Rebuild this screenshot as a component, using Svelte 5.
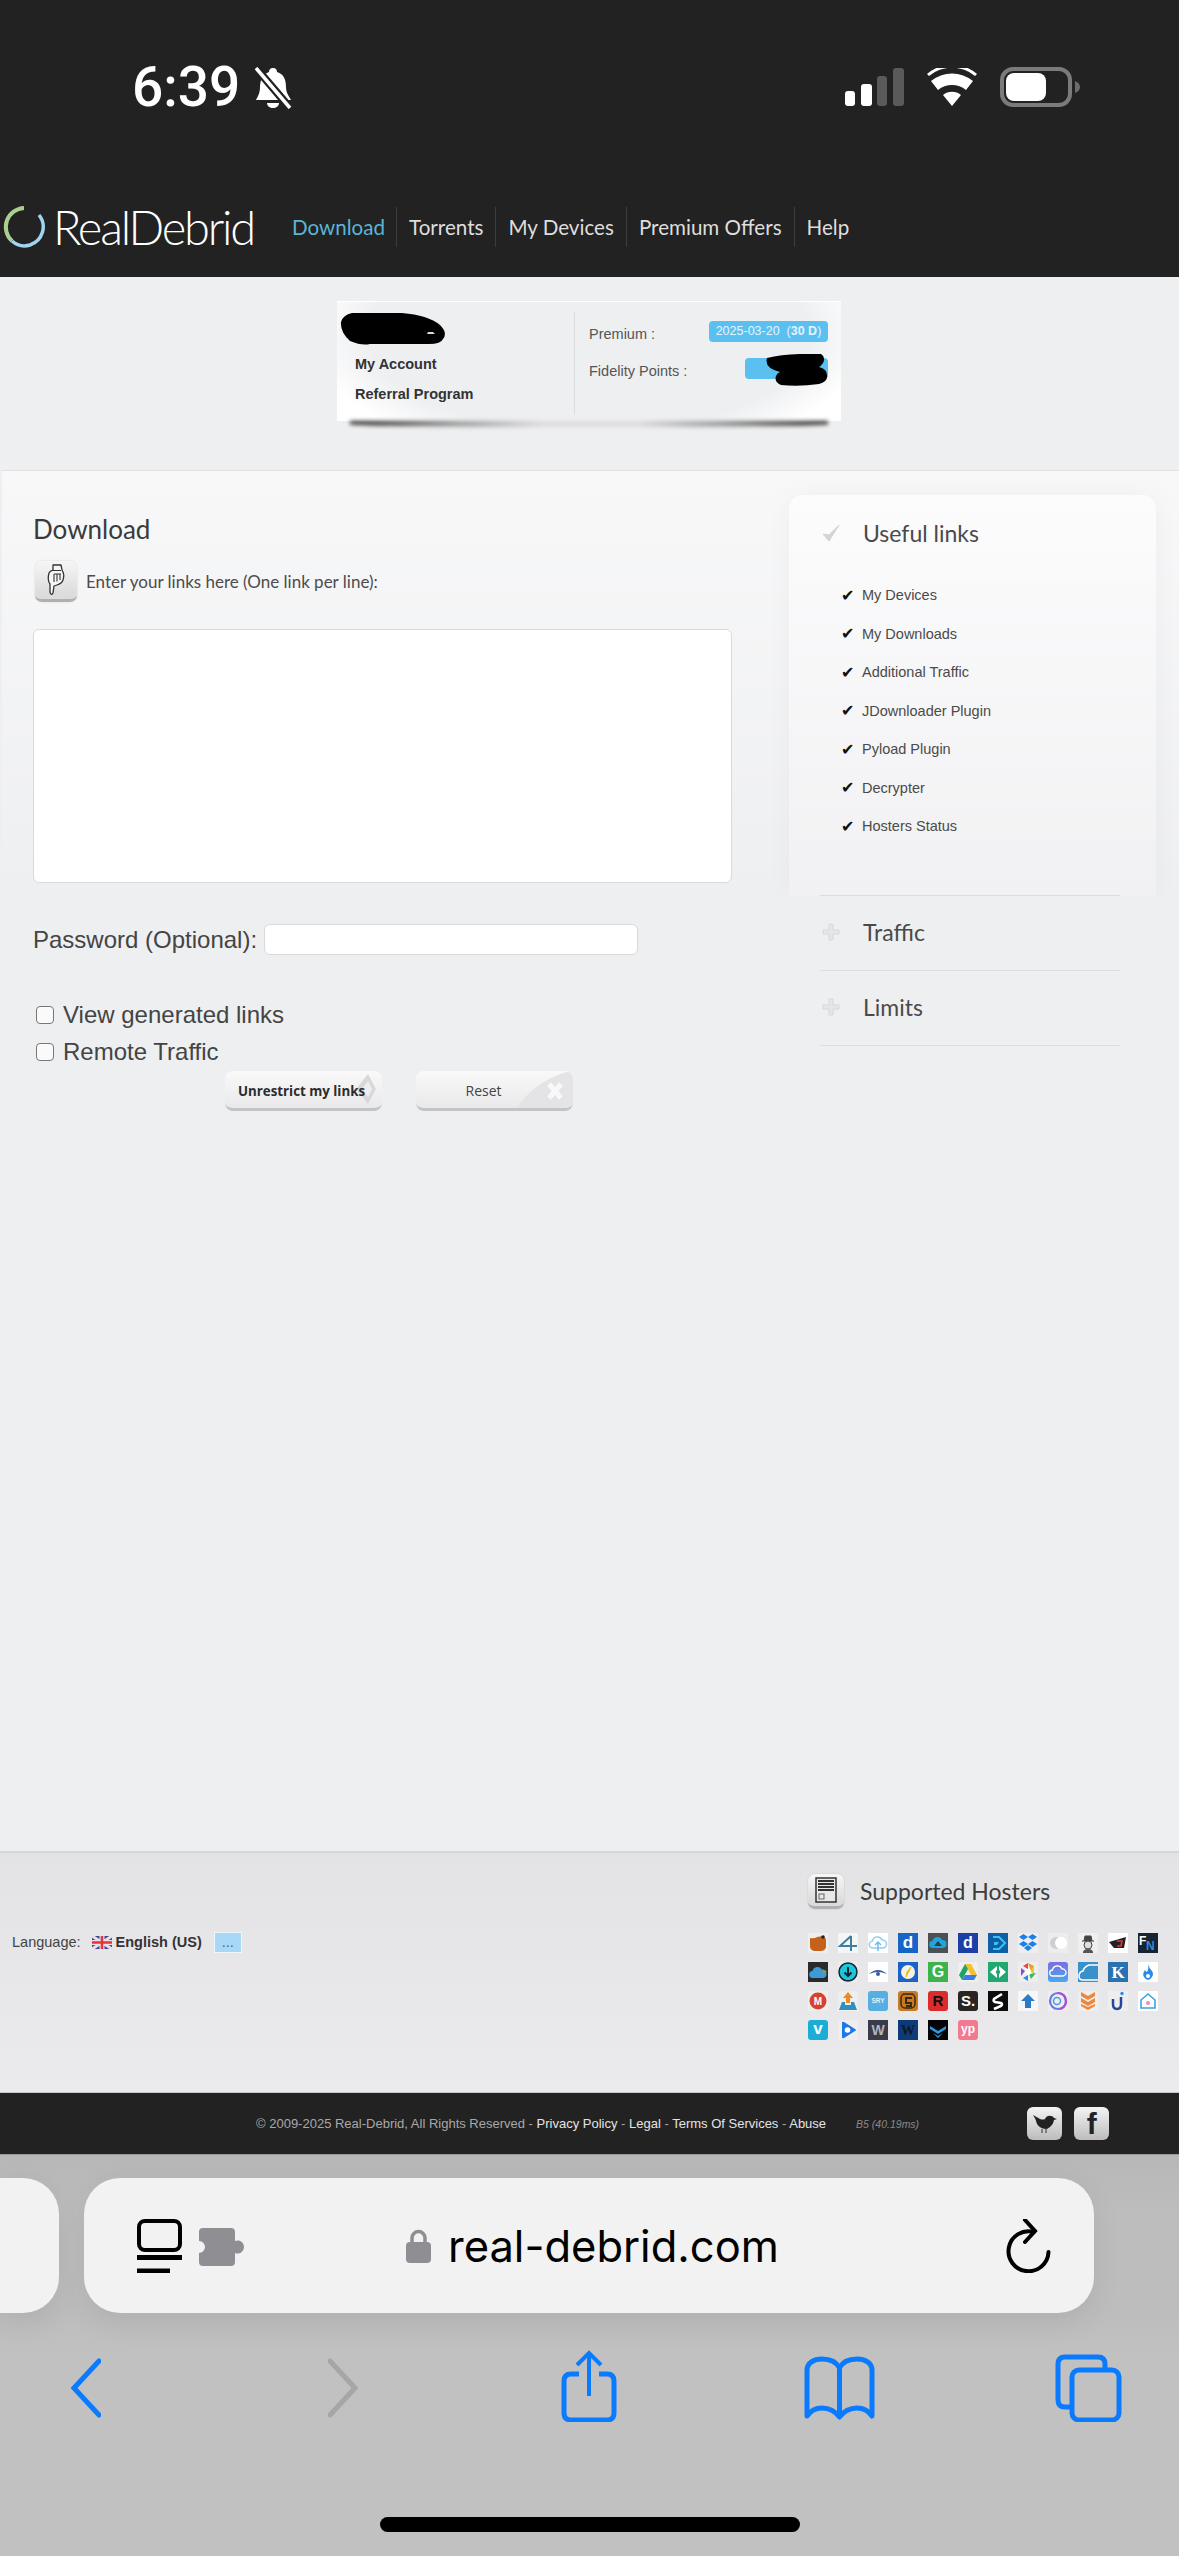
<script>
	const nav = ['Download', 'Torrents', 'My Devices', 'Premium Offers', 'Help'];
	const usefulLinks = ['My Devices', 'My Downloads', 'Additional Traffic', 'JDownloader Plugin', 'Pyload Plugin', 'Decrypter', 'Hosters Status'];

	const txt = (t, fill, size = 15, weight = 700, y = 15, family = 'Liberation Sans') =>
		`<text x="10" y="${y}" text-anchor="middle" font-family="${family}" font-size="${size}" font-weight="${weight}" fill="${fill}">${t}</text>`;
	const cloud = (fill) => `<path d="M5 15a3.5 3.5 0 0 1-.5-7 5 5 0 0 1 9.5-1 4 4 0 0 1 1 8z" fill="${fill}"/>`;

	// 12 per row, the last row is short
	const hosters = [
		{ bg: '#eeeeef', g: '<path d="M2 5q4 1 7-1l6-1 3 3v8q-1 4-5 4H7q-4 0-5-4z" fill="#c5611b"/><circle cx="15" cy="4" r="1.800" fill="#222"/>' },
		{ bg: '#f4f5f6', g: '<path d="M13 3 2 13h17M13 3v15" fill="none" stroke="#3f7f9c" stroke-width="2"/>' },
		{ bg: '#fff', g: '<path d="M5 15a3.5 3.5 0 0 1-.5-7 5 5 0 0 1 9.500-1 4 4 0 0 1 1 8z" fill="none" stroke="#8fd0f2" stroke-width="1.500"/><path d="M10 18V9M7 12l3-3 3 3" fill="none" stroke="#6fbfea" stroke-width="1.500"/>' },
		{ bg: '#1565c8', g: txt('d', '#fff', 17) },
		{ bg: '#4b5057', g: cloud('#1fa6d9') + '<path d="M10 8l-4 5h8z" fill="#24404f"/>' },
		{ bg: '#1c3fa6', g: txt('d', '#fff', 16) },
		{ bg: '#0f5ea8', g: '<path d="M5 4h6l6 6-6 6H5" fill="none" stroke="#35c5ee" stroke-width="2"/><path d="M6 9h5l-2 3H6z" fill="#35c5ee"/>' },
		{ bg: '#eeeeef', g: '<path d="m5.500 1 4.500 3-4.500 3L1 4zm9 0L19 4l-4.500 3L10 4zM5.500 8 10 11l-4.500 3L1 11zm9 0 4.500 3-4.500 3L10 11zM6 15l4-3 4 3-4 3z" fill="#1a80ea"/>' },
		{ bg: '#ededee', g: '<circle cx="8" cy="10" r="6" fill="#cfcfd1"/><circle cx="13" cy="10" r="6" fill="#fff"/>' },
		{ bg: '#efefef', g: '<path d="M4 8h12M6 8l1-5h6l1 5" fill="#444" stroke="#444"/><circle cx="10" cy="12" r="4" fill="#ddd" stroke="#444"/><path d="M5 20c0-3 2-4 5-4s5 1 5 4" fill="#555"/>' },
		{ bg: '#fff', g: '<path d="m1 9 17-5-2 11H6z" fill="#222"/><path d="M9 8h5l-1 5H9" fill="none" stroke="#e33" stroke-width="1.500"/>' },
		{ bg: '#162533', g: '<text x="1" y="12" font-family="Liberation Sans" font-size="12" font-weight="700" fill="#fff">F</text><text x="8" y="17" font-family="Liberation Sans" font-size="12" font-weight="700" fill="#2a8fe0">N</text>' },

		{ bg: '#2a2a2c', g: '<g transform="translate(0 1)">' + cloud('#3d9ad8') + '</g><path d="m14 7 5 2-4 4z" fill="#7a9a6a"/>' },
		{ bg: '#ececed', g: '<circle cx="10" cy="10" r="9" fill="#1cc8d8" stroke="#123" stroke-width="1.500"/><path d="M10 5v9M6.500 10.500 10 14l3.500-3.500" fill="none" stroke="#123" stroke-width="2"/>' },
		{ bg: '#fff', g: '<path d="M1 12q9-8 18 0-9-4-18 0z" fill="#3a5ca8"/><circle cx="10" cy="12" r="2" fill="#3a5ca8"/>' },
		{ bg: '#1a62c8', g: '<circle cx="10" cy="10" r="7" fill="#f2f2e6"/><path d="m13 5-5 10 1-5z" fill="#e8b820" stroke="#e8b820"/>' },
		{ bg: '#3cb44a', g: txt('G', '#fff', 16) },
		{ bg: '#eeeeef', g: '<path d="M7 2h6l6 11h-6z" fill="#f6c02c"/><path d="M7 2 1 13l3 5 6-11z" fill="#1fa463"/><path d="M4 18h12l3-5H7z" fill="#3a7be8"/>' },
		{ bg: '#1fa870', g: '<path d="m9 4-7 6 7 6zM11 4l7 6-7 6z" fill="#fff"/><path d="M8 8.500h4v3H8z" fill="#1fa870"/>' },
		{ bg: '#eeeeef', g: '<path d="M10 1 5 4l5 3z" fill="#e8483a"/><path d="m10 1 6 3-3 5z" fill="#f29a1f"/><path d="M16 4v8l-4-3z" fill="#f2c81f"/><path d="m18 11-5 6-2-5z" fill="#3ab86a"/><path d="m10 19-5-3 5-3z" fill="#2a8fe0"/><path d="M3 14V6l4 3z" fill="#8a4ad8"/><circle cx="10" cy="10" r="3" fill="#fff"/>' },
		{ rounded: true, bg: 'linear-gradient(#7a6ee0,#4aa8ee)', g: '<path d="M5 14a3 3 0 0 1-.500-6 5 5 0 0 1 9.500-1 3.500 3.500 0 0 1 1 7z" fill="none" stroke="#fff" stroke-width="1.300"/>' },
		{ bg: '#3a90c8', g: '<path d="M20 3H11Q6 5 5 9 1 10 1 14t4 4h15" fill="none" stroke="#fff" stroke-width="1.500"/>' },
		{ bg: '#2a72b0', g: txt('K', '#fff', 17, 700, 16, 'Liberation Serif') },
		{ bg: '#fff', g: '<path d="M10 2q1 4 4 7 2 3 0 6-2 3-4 3t-4-3q-2-3 1-7 1 2 2 2 2-3 1-8z" fill="#2a8ae8"/><circle cx="10" cy="14" r="2" fill="#fff"/>' },

		{ bg: '#eeeeef', g: '<circle cx="10" cy="10" r="8.500" fill="#d8412f"/>' + txt('M', '#fff', 10, 700, 13.500) },
		{ bg: '#eeeeef', g: '<path d="M10 1 15 7h-3v5H8V7H5z" fill="#ef8a1f"/><path d="M4 11h3v3h6v-3h3l3 8H1z" fill="#2f8fc0"/>' },
		{ rounded: true, bg: '#56aee2', g: txt('SRY', '#dff1fb', 6.500, 700, 12) },
		{ rounded: true, bg: '#c87a20', g: '<rect x="3" y="3" width="14" height="14" rx="4" fill="none" stroke="#3a2a14" stroke-width="1.500"/><path d="M14 7H8v5h5v3H8" fill="none" stroke="#3a2a14" stroke-width="2"/>' },
		{ rounded: true, bg: '#dd2b2b', g: txt('R', '#111', 15) },
		{ rounded: true, bg: '#2a2422', g: txt('S.', '#fff', 15) },
		{ bg: '#0c0c0c', g: '<path d="M14 3 6 8q-1 2 1 3l6 1q2 1 0 3l-7 3" fill="none" stroke="#fff" stroke-width="2.600"/>' },
		{ bg: '#f7f7f8', g: '<path d="M10 3 17 10h-4v7H7v-7H3z" fill="#2a7bc8"/>' },
		{ bg: '#eeeeef', g: '<circle cx="10" cy="10" r="8" fill="none" stroke="#6a78e8" stroke-width="2.200"/><path d="M10 2a8 8 0 0 1 8 8 8 8 0 0 1-6 8" fill="none" stroke="#b04ad8" stroke-width="2.200"/><circle cx="9" cy="10" r="3.500" fill="none" stroke="#4a9ae8" stroke-width="1.500"/>' },
		{ bg: '#eeeeef', g: '<path d="m3 1 7 4 7-4v4l-7 4-7-4zm0 6 7 4 7-4v4l-7 4-7-4zm0 6 7 3 7-3v2l-7 4-7-4z" fill="#ef8638"/>' },
		{ bg: '#eeeeef', g: '<path d="M13 6v7q0 5-4 5t-4-5V8" fill="none" stroke="#27479f" stroke-width="2.500"/><circle cx="14" cy="2.500" r="1.700" fill="#2a8ae8"/>' },
		{ bg: '#fff', g: '<path d="m10 3 7 6v8H3V9z" fill="none" stroke="#3aa0e8" stroke-width="1.600"/><circle cx="10" cy="12" r="2" fill="#e88ac8"/>' },

		{ rounded: true, bg: '#1aaed6', g: txt('v', '#fff', 17, 700, 14) },
		{ bg: '#eeeeef', g: '<path d="M4 3q0-2 2-1l11 7q2 1 0 2L6 18q-2 1-2-1z" fill="#1a78e8"/><circle cx="9.500" cy="10" r="2.800" fill="#fff"/>' },
		{ bg: '#3a3b4a', g: txt('W', '#b4b4b8', 14) },
		{ bg: '#0d3a7a', g: txt('W', '#101828', 14, 700, 15, 'Liberation Serif') },
		{ bg: '#050505', g: '<path d="m2 6 8 5 8-5v3l-8 5-8-5zm3 7 5 3 5-3-5 5z" fill="#2a9ae0"/>' },
		{ rounded: true, bg: '#f27a90', g: txt('yp', '#fff', 12, 700, 13) }
	];
</script>

<div class="page">
	<header class="top">
		<div class="status">
			<div class="time">6:39
				<svg class="bell" viewBox="0 0 40 42" width="40" height="42">
					<path d="M20 1c3 0 4 2 4 4 7 2 9 8 9 15 0 6 3 9 5 13H3c2-4 4-7 4-13 0-7 3-13 9-15 0-2 1-4 4-4z" fill="#fff"/>
					<path d="M14 36h12c0 3-3 5-6 5s-6-2-6-5z" fill="#fff"/>
					<path d="M3 1l34 40" stroke="#222" stroke-width="8"/>
					<path d="M3 1l34 40" stroke="#fff" stroke-width="3.500"/>
				</svg>
			</div>
			<div class="indicators">
				<svg viewBox="0 0 59 38" width="59" height="38">
					<rect x="0" y="23" width="10" height="15" rx="3" fill="#fff"/>
					<rect x="16" y="16" width="11" height="22" rx="3" fill="#fff"/>
					<rect x="32" y="8" width="10" height="30" rx="3" fill="#5a5a5a"/>
					<rect x="48" y="0" width="11" height="38" rx="3" fill="#5a5a5a"/>
				</svg>
				<svg viewBox="0 0 50 38" width="50" height="38">
					<path d="M25 38 16 27a14 14 0 0 1 18 0zM11 22l-7-9a33 33 0 0 1 42 0l-7 9a22 22 0 0 0-28 0z" fill="#fff"/>
					<path d="M2 8 0 6a38 38 0 0 1 50 0l-2 2a36 36 0 0 0-46 0z" fill="#fff"/>
				</svg>
				<svg viewBox="0 0 80 40" width="80" height="40">
					<rect x="2" y="2" width="68" height="36" rx="11" fill="none" stroke="#7b7b7b" stroke-width="4"/>
					<rect x="6" y="6" width="40" height="28" rx="8" fill="#fff"/>
					<path d="M75 14q5 2 5 6t-5 6z" fill="#6b6b6b"/>
				</svg>
			</div>
		</div>
		<div class="brandbar">
			<div class="logo">
				<svg viewBox="0 0 44 44" width="44" height="44">
					<path d="M22 3a19 19 0 0 0-12 33" fill="none" stroke="#a9d08e" stroke-width="4"/>
					<path d="M10 36a19 19 0 0 0 18 4 19 19 0 0 0 9-30" fill="none" stroke="#9fd5ef" stroke-width="3.500"/>
				</svg>
				<span class="wordmark">RealDebrid</span>
			</div>
			<nav>
				{#each nav as item, i}
					<span class="navitem" class:active={i === 0}>{item}</span>
				{/each}
			</nav>
		</div>
	</header>

	<main>
		<div class="account">
			<div class="acc-left">
				<div class="acc-link first">My Account</div>
				<div class="acc-link">Referral Program</div>
			</div>
			<div class="acc-right">
				<div class="acc-row">
					<span class="acc-label">Premium :</span>
					<span class="pill">2025-03-20 &nbsp;(<b>30 D</b>)</span>
				</div>
				<div class="acc-row second">
					<span class="acc-label">Fidelity Points :</span>
					<span class="pill short"></span>
				</div>
			</div>
			<svg class="blob name" viewBox="0 0 106 34" width="106" height="34">
				<path d="M12 1h50q26 2 38 12 8 8 3 14-2 5-14 5H30q-8 2-20-3Q0 20 1 10 3 3 12 1z" fill="#000"/>
				<path d="M88 20h5l2 2h-8z" fill="#e8d8c8"/>
			</svg>
			<svg class="blob points" viewBox="0 0 64 32" width="64" height="32">
				<path d="M3 4q20-5 54-4 5 3 2 9-2 3-4 4 8 2 8 8 1 7-8 9-20 3-38 1-7-3-5-9 1-3 4-4Q0 14 3 4z" fill="#000"/>
			</svg>
		</div>

		<section class="workspace">
			<div class="form">
				<h1>Download</h1>
				<div class="hint">
					<span class="tile">
						<svg viewBox="0 0 20 32" width="20" height="32">
							<path d="M7 1h8l1 5c2 3 2 7 1 10-1 3-3 4-6 5l-3 1-1 7q-1 2-2 1-1-1-1-2v-8Q1 16 3 9q1-2 4-3z" fill="#f6f6f6" stroke="#333" stroke-width="1.300" stroke-linejoin="round"/>
							<path d="M6 6.500h9M8 10v8M11 9.500v8M14 9.500v6.500M8 10h7" fill="none" stroke="#333" stroke-width="1.100"/>
						</svg>
					</span>
					<span>Enter your links here (One link per line):</span>
				</div>
				<textarea aria-label="Links"></textarea>
				<div class="password">
					<label for="pw">Password (Optional):</label>
					<input id="pw" type="text" />
				</div>
				<label class="check first"><input type="checkbox" />View generated links</label>
				<label class="check"><input type="checkbox" />Remote Traffic</label>
				<div class="actions">
					<button class="primary">
						<svg viewBox="0 0 24 34" width="24" height="34"><path d="M14 2 2 17l12 15 8-15z" fill="#d8d8da"/><path d="m14 9-6 8 6 8 4-8z" fill="#eeeef0"/></svg>
						<span class="label">Unrestrict my links</span>
					</button>
					<button class="reset">
						<svg viewBox="0 0 56 38" width="56" height="38"><path d="M0 38Q18 10 56 0v38z" fill="#e4e4e6"/><path d="m32 14 12 14m0-14L32 28" stroke="#f8f8f9" stroke-width="5"/></svg>
						<span class="label">Reset</span>
					</button>
				</div>
			</div>

			<aside>
				<div class="card">
					<div class="acc-head open">
						<svg viewBox="0 0 18 18" width="18" height="18"><path d="m1 10 6 7L17 1 7 11z" fill="#d4d4d6" stroke="#d4d4d6"/></svg>
						<span>Useful links</span>
					</div>
					<ul>
						{#each usefulLinks as link}
							<li><span class="tick">✔</span>{link}</li>
						{/each}
					</ul>
					<div class="rule"></div>
				</div>
				<div class="acc-head closed">
					<svg viewBox="0 0 18 18" width="18" height="18"><path d="M7 1h4v6h6v4h-6v6H7v-6H1V7h6z" fill="#e6e6e8" stroke="#d8d8da"/></svg>
					<span>Traffic</span>
				</div>
				<div class="acc-head closed">
					<svg viewBox="0 0 18 18" width="18" height="18"><path d="M7 1h4v6h6v4h-6v6H7v-6H1V7h6z" fill="#e6e6e8" stroke="#d8d8da"/></svg>
					<span>Limits</span>
				</div>
			</aside>
		</section>

		<section class="lower">
			<div class="language">
				<span class="lang-label">Language:</span>
				<svg viewBox="0 0 20 13" width="20" height="13">
					<rect width="20" height="13" fill="#3a4a94"/>
					<path d="m0 0 20 13M20 0 0 13" stroke="#eadfe6" stroke-width="3"/>
					<path d="M10 0v13M0 6.500h20" stroke="#eadfe6" stroke-width="5"/>
					<path d="M10 0v13M0 6.500h20" stroke="#e2353a" stroke-width="2.500"/>
				</svg>
				<b>English (US)</b>
				<span class="more">...</span>
			</div>
			<div class="hosters">
				<div class="hosters-head">
					<span class="tile small">
						<svg viewBox="0 0 22 26" width="22" height="26">
							<rect x="1" y="1" width="20" height="24" fill="#e8e8e8" stroke="#333" stroke-width="1.500"/>
							<path d="M3 4h16M3 7h16M3 10h16M3 13h16" stroke="#333" stroke-width="1.800"/>
							<rect x="4" y="17" width="5" height="5" fill="none" stroke="#666"/>
						</svg>
					</span>
					<span>Supported Hosters</span>
				</div>
				<div class="grid">
					{#each hosters as h}
						<span class="hoster" class:rounded={h.rounded} style="background:{h.bg}">
							<svg viewBox="0 0 20 20" width="20" height="20">{@html h.g}</svg>
						</span>
					{/each}
				</div>
			</div>
		</section>

		<footer>
			<span class="legal">© 2009-2025 Real-Debrid, All Rights Reserved - <em>Privacy Policy</em> - <em>Legal</em> - <em>Terms Of Services</em> - <em>Abuse</em></span>
			<span class="build">B5 (40.19ms)</span>
			<span class="social">
				<svg viewBox="0 0 26 24" width="26" height="24">
					<path d="M1 3l7 4q3 1 5 0 2-4 6-3 2 0 3 2l3 1-3 1q-1 6-7 9-7 0-10-5Q4 7 1 3z" fill="#222"/>
					<path d="M10 17v4M14 17v4" stroke="#666" stroke-width="1.500"/>
				</svg>
			</span>
			<span class="social fb">f</span>
		</footer>
	</main>

	<div class="browser">
		<div class="urlrow">
			<div class="peek"></div>
			<div class="urlbar">
				<svg class="tabs-ico" viewBox="0 0 45 54" width="45" height="54">
					<rect x="2" y="2" width="41" height="29" rx="6" fill="none" stroke="#000" stroke-width="4"/>
					<path d="M0 38.500h45" stroke="#000" stroke-width="5"/>
					<path d="M0 52h33" stroke="#000" stroke-width="5"/>
				</svg>
				<svg class="puzzle" viewBox="0 0 47 38" width="47" height="38">
					<path d="M4 0h28q4 0 4 4v9a6.500 6.500 0 1 1 0 12v9q0 4-4 4H4q-4 0-4-4v-9a6 6 0 1 0 0-12V4q0-4 4-4z" fill="#8e8e93"/>
				</svg>
				<div class="address">
					<svg viewBox="0 0 25 34" width="25" height="34">
						<path d="M6 15V9a6.500 6.500 0 0 1 13 0v6" fill="none" stroke="#8e8e93" stroke-width="3.500"/>
						<rect y="13" width="25" height="21" rx="4" fill="#8e8e93"/>
					</svg>
					<span>real-debrid.com</span>
				</div>
				<svg class="reload" viewBox="0 0 45 54" width="45" height="54">
					<path d="M28 13A20 20 0 1 0 42.500 33" fill="none" stroke="#000" stroke-width="4" stroke-linecap="round"/>
					<path d="m19 1 10 11-10 11" fill="none" stroke="#000" stroke-width="4" stroke-linecap="round"/>
				</svg>
			</div>
		</div>
		<div class="toolbar">
			<svg class="back" viewBox="0 0 30 72" width="30" height="72"><path d="M28 11 3 38l25 27" fill="none" stroke="#0a7aff" stroke-width="5" stroke-linecap="round"/></svg>
			<svg class="forward" viewBox="0 0 30 72" width="30" height="72"><path d="m2 11 25 27L2 65" fill="none" stroke="#a6a6a6" stroke-width="5" stroke-linecap="round"/></svg>
			<svg class="share" viewBox="0 0 56 72" width="56" height="72">
				<path d="M18 24h-8q-7 0-7 7v32q0 7 7 7h36q7 0 7-7V31q0-7-7-7h-8" fill="none" stroke="#0a7aff" stroke-width="5"/>
				<path d="M28 46V3M16 15 28 3l12 12" fill="none" stroke="#0a7aff" stroke-width="4"/>
			</svg>
			<svg class="book" viewBox="0 0 71 72" width="71" height="72">
				<path d="M35.500 18C32 11 24 9 18 9 10 9 3 13 3 20v46c4-6 9-8 15-8 7 0 13 3 17.500 9 4.500-6 10.500-9 17.500-9 6 0 11 2 15 8V20c0-7-7-11-15-11-6 0-14 2-17.500 9zM35.500 18v46" fill="none" stroke="#0a7aff" stroke-width="5" stroke-linejoin="round"/>
			</svg>
			<svg class="tabs" viewBox="0 0 67 72" width="67" height="72">
				<path d="M50 20v-6q0-7-7-7H10q-7 0-7 7v36q0 7 7 7h7" fill="none" stroke="#0a7aff" stroke-width="5"/>
				<rect x="17" y="20" width="47" height="50" rx="7" fill="none" stroke="#0a7aff" stroke-width="5"/>
			</svg>
		</div>
		<div class="homebar"></div>
	</div>
</div>

<style>
	:global(body) {
		margin: 0;
		background: #c0c0c0;
	}

	.page {
		width: 1179px;
		height: 2556px;
		display: flex;
		flex-direction: column;
		overflow: hidden;
		font-family: "Liberation Sans", Arial, sans-serif;
		color: #3c3c3c;
	}

	/* dark header with the phone status bar on top */
	.top {
		height: 277px;
		box-sizing: border-box;
		background: #222223;
		color: #fff;
		padding-top: 66px;
	}
	.status {
		display: flex;
		justify-content: space-between;
		padding: 0 99px 0 132px;
		height: 42px;
	}
	.time {
		display: flex;
		align-items: center;
		gap: 13px;
		font: 500 55px/42px Roboto, sans-serif;
	}
	.bell {
		margin-top: 1px;
	}
	.indicators {
		display: flex;
		align-items: center;
		gap: 23px;
	}
	.brandbar {
		display: flex;
		align-items: center;
		height: 48px;
		margin-top: 95px;
	}
	.logo {
		display: flex;
		align-items: center;
		gap: 7px;
		margin-left: 2px;
		width: 290px;
	}
	.wordmark {
		font: 300 47px/48px Lato, sans-serif;
		letter-spacing: -2.2px;
	}
	nav {
		display: flex;
		align-items: center;
	}
	.navitem {
		font: 400 20.6px/40px Lato, sans-serif;
		color: #dedede;
		padding: 0 12px;
		border-left: 1px solid #3d3d3e;
	}
	.navitem.active {
		color: #5ab5d6;
		border-left: none;
		padding: 0 11px 0 0;
	}

	main {
		display: flex;
		flex-direction: column;
		background: #eeeff1;
		height: 1878px;
	}

	/* account box */
	.account {
		position: relative;
		display: flex;
		box-sizing: border-box;
		width: 504px;
		height: 120px;
		margin: 24px 0 49px 337px;
		background: radial-gradient(ellipse 56% 105% at 50% 28%, #eeeff1 78%, #fff 100%);
		border-top: 1px solid #fff;
		font-size: 14.5px;
	}
	.account::after {
		content: "";
		position: absolute;
		left: 13px;
		right: 13px;
		top: 100%;
		height: 6px;
		background: linear-gradient(to right, #222, #999 22%, #ddd 40%, #ddd 60%, #999 78%, #222);
		filter: blur(2px);
		border-radius: 0 0 50% 50%;
	}
	.acc-left {
		width: 237px;
		box-sizing: border-box;
		padding: 52px 0 0 18px;
	}
	.acc-link {
		font-weight: 700;
		line-height: 20px;
		margin-bottom: 10px;
		color: #333;
	}
	.acc-right {
		flex: 1;
		margin: 10px 0 6px;
		padding: 8px 13px 0 14px;
		border-left: 1px solid #dcdcde;
		color: #555;
	}
	.acc-row {
		display: flex;
		justify-content: space-between;
		align-items: center;
		height: 22px;
	}
	.acc-row.second {
		margin-top: 15px;
	}
	.acc-label {
		padding-top: 5px;
	}
	.pill {
		box-sizing: border-box;
		width: 119px;
		height: 21px;
		line-height: 21px;
		text-align: center;
		font-size: 12.5px;
		color: #e4f4fc;
		background: #5bc0ef;
		border-radius: 4px;
		white-space: nowrap;
	}
	.pill.short {
		width: 83px;
	}
	.blob {
		position: absolute;
	}
	.blob.name {
		left: 3px;
		top: 10px;
	}
	.blob.points {
		right: 13px;
		top: 52px;
	}

	/* main two columns */
	.workspace {
		position: relative;
		flex: 1;
		display: flex;
		justify-content: space-between;
		box-sizing: border-box;
		margin-left: 2px;
		padding: 24px 23px 0 31px;
		background: linear-gradient(#f8f8f9, #eeeff1 430px);
		border-top: 1px solid #e1e1e3;
	}
	.form {
		width: 698px;
	}
	h1 {
		margin: 14px 0 12px;
		font: 400 26px/40px Lato, sans-serif;
		color: #3a3a3a;
	}
	.hint {
		display: flex;
		align-items: center;
		gap: 9px;
		margin: 0 0 27px 2px;
		font: 400 17px/41px Lato, sans-serif;
		color: #4c4c4c;
	}
	.tile {
		display: flex;
		align-items: center;
		justify-content: center;
		box-sizing: border-box;
		width: 42px;
		height: 41px;
		border-radius: 7px;
		background: linear-gradient(#f6f6f6, #dcdcdc 85%);
		border-bottom: 3px solid #b0b0b0;
		box-shadow: 0 0 2px rgba(0, 0, 0, 0.15);
	}
	.tile.small {
		width: 36px;
		height: 35px;
	}
	textarea {
		display: block;
		box-sizing: border-box;
		width: 699px;
		height: 254px;
		margin: 0;
		background: #fff;
		border: 1px solid #dadada;
		border-radius: 6px;
		resize: none;
		outline: none;
	}
	.password {
		display: flex;
		align-items: center;
		gap: 7px;
		margin-top: 41px;
		font-size: 24px;
		color: #444;
	}
	.password input {
		box-sizing: border-box;
		width: 374px;
		height: 31px;
		margin: 0;
		background: #fff;
		border: 1px solid #dadada;
		border-radius: 6px;
	}
	.check {
		display: flex;
		align-items: center;
		gap: 9px;
		height: 37px;
		margin-left: 3px;
		font-size: 24px;
		color: #444;
	}
	.check.first {
		margin-top: 41px;
	}
	.check input {
		appearance: none;
		box-sizing: border-box;
		width: 18px;
		height: 18px;
		margin: 0;
		background: #fafafa;
		border: 1.5px solid #777;
		border-radius: 4px;
	}
	.actions {
		display: flex;
		gap: 34px;
		margin: 1px 0 0 192px;
	}
	button {
		position: relative;
		box-sizing: border-box;
		width: 157px;
		height: 40px;
		padding: 2px 0 0;
		background: linear-gradient(#f9f9f9, #e9e9eb);
		border: none;
		border-bottom: 3px solid #c4c4c6;
		border-radius: 8px;
		font: 400 14px/20px "Open Sans", sans-serif;
		color: #444;
		overflow: hidden;
		white-space: nowrap;
	}
	button svg {
		position: absolute;
		right: 0;
		bottom: 0;
	}
	.label {
		position: relative;
	}
	.primary {
		font-size: 13.3px;
		font-weight: 700;
		color: #2c2c2c;
		text-align: left;
		padding-left: 13px;
	}
	.primary svg {
		right: 4px;
		bottom: 2px;
	}
	.reset {
		padding-right: 24px;
		padding-left: 2px;
	}

	/* right column */
	aside {
		width: 367px;
	}
	.card {
		height: 401px;
		box-sizing: border-box;
		padding: 18px 36px 0 31px;
		border-radius: 14px 14px 0 0;
		background: linear-gradient(#fcfcfd, #f1f1f3);
		box-shadow: 0 0 26px rgba(0, 0, 0, 0.04);
		clip-path: inset(-30px -30px 0 -30px);
		display: flex;
		flex-direction: column;
	}
	.acc-head {
		display: flex;
		align-items: center;
		gap: 23px;
		font: 400 23px/40px Lato, sans-serif;
		color: #4a4a4a;
	}
	.acc-head.open {
		padding-left: 2px;
	}
	.acc-head.closed {
		box-sizing: border-box;
		height: 75px;
		margin: 0 36px 0 31px;
		padding: 0 0 3px 2px;
		border-bottom: 1px solid #dcdcde;
	}
	ul {
		list-style: none;
		margin: 23px 0 0;
		padding: 0;
		flex: 1;
	}
	li {
		display: flex;
		align-items: center;
		height: 38.5px;
		font-size: 14.5px;
		color: #4a4a4a;
	}
	.tick {
		width: 42px;
		box-sizing: border-box;
		padding-left: 21px;
		font: 16px "DejaVu Sans", sans-serif;
		color: #111;
	}
	.rule {
		border-top: 1px solid #dcdcde;
	}

	/* language + hosters */
	.lower {
		height: 241px;
		display: flex;
		justify-content: space-between;
		box-sizing: border-box;
		padding: 21px 0 0 12px;
		background: linear-gradient(#e3e3e5, #ebebed);
		border-top: 2px solid #d6d6d8;
	}
	.language {
		display: flex;
		align-items: center;
		height: 22px;
		margin-top: 57px;
		font-size: 14.5px;
		color: #333;
	}
	.lang-label {
		margin-right: 11px;
		color: #444;
	}
	.language b {
		margin: 0 12px 0 4px;
	}
	.more {
		box-sizing: border-box;
		width: 28px;
		height: 21px;
		line-height: 19px;
		text-align: center;
		background: #a8d8f5;
		border: 1px solid #eef6fb;
		color: #3a6a8a;
	}
	.hosters {
		width: 371px;
	}
	.hosters-head {
		display: flex;
		align-items: center;
		gap: 16px;
		font: 400 23px/35px Lato, sans-serif;
		color: #3c3c3c;
	}
	.grid {
		display: grid;
		grid-template-columns: repeat(12, 20px);
		column-gap: 10px;
		row-gap: 9px;
		margin-top: 24px;
	}
	.hoster {
		display: block;
		width: 20px;
		height: 20px;
		overflow: hidden;
	}
	.hoster svg {
		display: block;
	}
	.hoster.rounded {
		border-radius: 3px;
	}

	footer {
		display: flex;
		align-items: center;
		box-sizing: border-box;
		height: 63px;
		padding-left: 256px;
		background: #222223;
		border-top: 1px solid #c8c8ca;
		border-bottom: 1px solid #9a9a9a;
		font-size: 13px;
		color: #a8a8a8;
		white-space: nowrap;
	}
	.legal em {
		font-style: normal;
		color: #e4e4e4;
	}
	.build {
		margin: 0 108px 0 30px;
		font-size: 10.5px;
		font-style: italic;
		color: #8a8a8a;
	}
	.social {
		display: flex;
		align-items: center;
		justify-content: center;
		box-sizing: border-box;
		width: 35px;
		height: 33px;
		border-radius: 6px;
		background: linear-gradient(#f4f4f4, #bcbcbc);
		margin-right: 12px;
	}
	.fb {
		font: 700 30px/30px "Liberation Sans", sans-serif;
		color: #222;
	}

	/* safari chrome */
	.browser {
		flex: 1;
		background: linear-gradient(#b7b7b7, #bdbdbd 60px, #bdbdbd 160px, #c1c1c1 200px);
	}
	.urlrow {
		display: flex;
		gap: 25px;
		margin-top: 23px;
	}
	.peek {
		width: 59px;
		height: 135px;
		background: #f2f2f2;
		border-radius: 0 36px 36px 0;
		box-shadow: 0 8px 30px rgba(0, 0, 0, 0.08);
	}
	.urlbar {
		display: flex;
		align-items: center;
		box-sizing: border-box;
		width: 1010px;
		height: 135px;
		padding: 0 43px 0 53px;
		background: #f2f2f2;
		border-radius: 36px;
		box-shadow: 0 8px 30px rgba(0, 0, 0, 0.08);
	}
	.puzzle {
		margin: 2px 0 0 17px;
	}
	.address {
		flex: 1;
		display: flex;
		align-items: center;
		gap: 17px;
		padding-left: 160px;
		font: 400 43.5px/54px Inter, sans-serif;
		color: #000;
	}
	.toolbar {
		display: flex;
		margin-top: 37px;
		padding-left: 71px;
	}
	.forward {
		margin-left: 227px;
	}
	.share {
		margin-left: 203px;
	}
	.book {
		margin-left: 187px;
	}
	.tabs {
		margin-left: 180px;
	}
	.homebar {
		width: 420px;
		height: 15px;
		margin: 95px 0 0 380px;
		background: #000;
		border-radius: 8px;
	}
</style>
